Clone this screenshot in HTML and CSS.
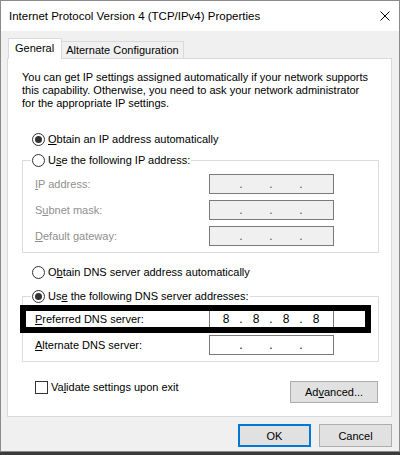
FILE: index.html
```html
<!DOCTYPE html>
<html lang="en">
<head>
  <meta charset="UTF-8">
  <title>Internet Protocol Version 4 (TCP/IPv4) Properties</title>
  <link rel="stylesheet" href="styles.css">
</head>
<body>
  <div class="dialog">
    <div class="titlebar">
      <span class="title">Internet Protocol Version 4 (TCP/IPv4) Properties</span>
      <svg class="close" width="10" height="10" viewBox="0 0 10 10">
        <path d="M0.5 0.5 L9.5 9.5 M9.5 0.5 L0.5 9.5" stroke="#000" stroke-width="1" fill="none"/>
      </svg>
    </div>

    <div class="content">
      <div class="tabs">
        <div class="tab active">General</div>
        <div class="tab">Alternate Configuration</div>
      </div>

      <div class="panel">
        <p class="intro">You can get IP settings assigned automatically if your network supports<br>
          this capability. Otherwise, you need to ask your network administrator<br>
          for the appropriate IP settings.</p>

        <div class="radio-row top-radio">
          <span class="radio checked"></span>
          <span><u>O</u>btain an IP address automatically</span>
        </div>

        <fieldset class="group ip-group">
          <legend class="radio-row">
            <span class="radio"></span>
            <span>U<u>s</u>e the following IP address:</span>
          </legend>
          <div class="field-row disabled">
            <span class="label"><u>I</u>P address:</span>
            <span class="ip-field"><i></i><b>.</b><i></i><b>.</b><i></i><b>.</b><i></i></span>
          </div>
          <div class="field-row disabled">
            <span class="label">S<u>u</u>bnet mask:</span>
            <span class="ip-field"><i></i><b>.</b><i></i><b>.</b><i></i><b>.</b><i></i></span>
          </div>
          <div class="field-row disabled">
            <span class="label"><u>D</u>efault gateway:</span>
            <span class="ip-field"><i></i><b>.</b><i></i><b>.</b><i></i><b>.</b><i></i></span>
          </div>
        </fieldset>

        <div class="radio-row dns-auto">
          <span class="radio"></span>
          <span>O<u>b</u>tain DNS server address automatically</span>
        </div>

        <fieldset class="group dns-group">
          <legend class="radio-row">
            <span class="radio checked"></span>
            <span>Us<u>e</u> the following DNS server addresses:</span>
          </legend>
          <div class="field-row highlighted">
            <span class="label"><u>P</u>referred DNS server:</span>
            <span class="ip-field"><i>8</i><b>.</b><i>8</i><b>.</b><i>8</i><b>.</b><i>8</i></span>
          </div>
          <div class="field-row">
            <span class="label"><u>A</u>lternate DNS server:</span>
            <span class="ip-field"><i></i><b>.</b><i></i><b>.</b><i></i><b>.</b><i></i></span>
          </div>
        </fieldset>

        <div class="panel-footer">
          <label class="check-row">
            <span class="checkbox"></span>
            <span>Va<u>l</u>idate settings upon exit</span>
          </label>
          <button class="btn advanced">Ad<u>v</u>anced...</button>
        </div>
      </div>

      <div class="dialog-buttons">
        <button class="btn default">OK</button>
        <button class="btn">Cancel</button>
      </div>
    </div>
  </div>
</body>
</html>
```

FILE: styles.css
```css
body {
  margin: 0;
  background: #3a3a3a;
  font-family: "Segoe UI", "Liberation Sans", Arial, sans-serif;
  font-size: 11px;
  color: #000;
}
.dialog {
  width: 400px;
  height: 452px;
  box-sizing: border-box;
  background: #f0f0f0;
  border: 1px solid #8a8a8a;
}
.titlebar {
  height: 30px;
  background: #fff;
  display: flex;
  align-items: center;
  justify-content: space-between;
  padding: 0 9px 0 8px;
}
.title {
  font-size: 11.5px;
}
.close {
  display: block;
}
.content {
  padding: 7px 0 0 6px;
}

/* tabs */
.tabs {
  display: flex;
  align-items: flex-end;
  height: 20px;
  padding-left: 1px;
}
.tab {
  box-sizing: border-box;
  height: 17px;
  border: 1px solid #d9d9d9;
  border-bottom: none;
  background: #f0f0f0;
  padding: 0 4px;
  line-height: 17px;
  margin-left: -1px;
}
.tab.active {
  height: 21px;
  margin-bottom: -1px;
  margin-left: 0;
  background: #fff;
  padding: 1px 7px 0 6px;
  line-height: 17px;
  position: relative;
  z-index: 1;
}

/* main panel */
.panel {
  box-sizing: border-box;
  width: 385px;
  background: #fff;
  border: 1px solid #d9d9d9;
  padding: 12px 12px 13px 14px;
}
.intro {
  margin: 0;
  line-height: 13px;
  white-space: nowrap;
}
.radio-row {
  display: flex;
  align-items: center;
  height: 16px;
  white-space: nowrap;
}
.radio {
  box-sizing: border-box;
  width: 13px;
  height: 13px;
  border: 1px solid #333;
  border-radius: 50%;
  margin-right: 3px;
  display: flex;
  align-items: center;
  justify-content: center;
  flex: none;
}
.radio.checked::after {
  content: "";
  width: 7px;
  height: 7px;
  border-radius: 50%;
  background: #333;
}
.top-radio {
  margin: 21px 0 0 10px;
}
.dns-auto {
  margin: 11px 0 0 10px;
}

/* group boxes */
.group {
  margin: 5px 0 0;
  padding: 6px 0 6px 12px;
  border: 1px solid #dcdcdc;
  width: 357px;
  box-sizing: border-box;
  min-width: 0;
}
.group legend {
  padding: 0 1px;
  margin-left: -4px;
  background: #fff;
}
.dns-group {
  margin-top: 8px;
  padding-top: 5px;
}
.field-row {
  display: flex;
  align-items: center;
  height: 20px;
}
.field-row + .field-row {
  margin-top: 6px;
}
.label {
  width: 174px;
  white-space: nowrap;
}
.disabled .label {
  color: #8f8f8f;
}
.ip-field {
  box-sizing: border-box;
  width: 125px;
  height: 20px;
  border: 1px solid #7a7a7a;
  background: #fff;
  display: flex;
  align-items: center;
  padding-left: 3px;
  font-size: 12px;
}
.disabled .ip-field {
  background: #f0f0f0;
}
.ip-field i {
  font-style: normal;
  width: 26px;
  text-align: center;
}
.ip-field b {
  font-weight: normal;
  width: 4px;
  text-align: center;
}
.disabled .ip-field b {
  color: #555;
}

/* annotation box round the preferred DNS row */
.highlighted {
  position: relative;
}
.highlighted::after {
  content: "";
  position: absolute;
  left: -15px;
  top: -4px;
  width: 351px;
  height: 28px;
  box-sizing: border-box;
  border: 6px solid #000;
}

/* footer */
.panel-footer {
  display: flex;
  justify-content: space-between;
  align-items: flex-start;
  margin-top: 17px;
  padding: 0 1px 0 13px;
  width: 357px;
  box-sizing: border-box;
}
.check-row {
  display: flex;
  align-items: center;
  height: 16px;
}
.checkbox {
  box-sizing: border-box;
  width: 13px;
  height: 13px;
  border: 1px solid #333;
  margin-right: 3px;
}
.btn {
  box-sizing: border-box;
  font: inherit;
  color: #000;
  background: #e1e1e1;
  border: 1px solid #adadad;
  width: 73px;
  height: 23px;
  padding: 0;
}
.advanced {
  width: 88px;
  height: 22px;
  margin-top: 2px;
}
.dialog-buttons {
  display: flex;
  justify-content: flex-end;
  gap: 8px;
  width: 385px;
  margin-top: 7px;
}
.btn.default {
  border: 2px solid #0078d7;
}
```
